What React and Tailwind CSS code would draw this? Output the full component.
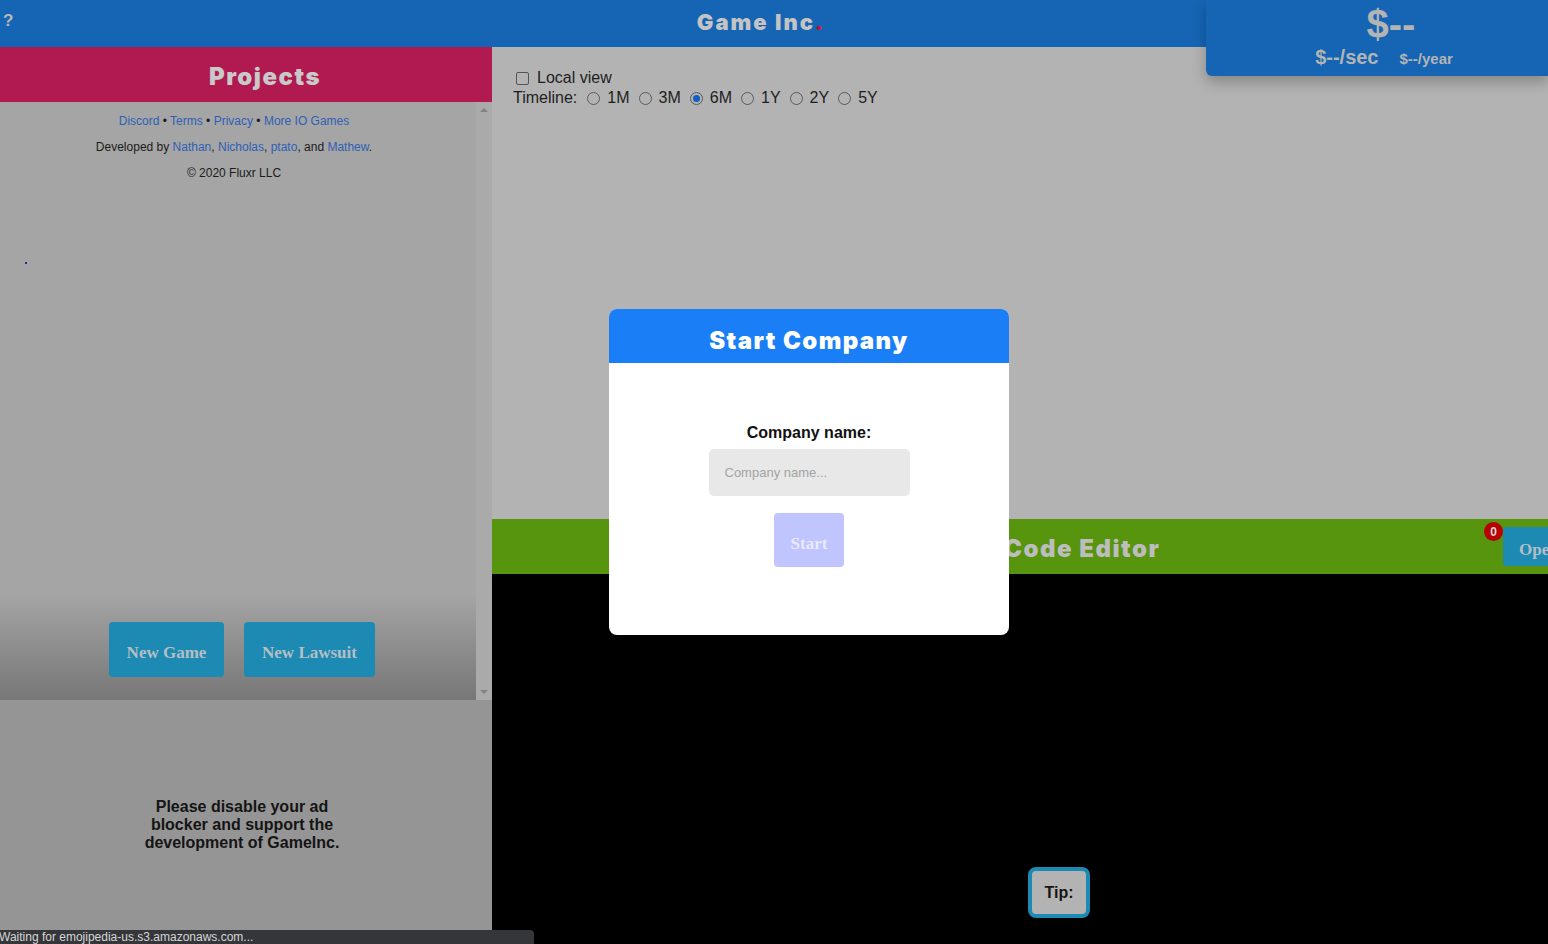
import { useState } from "react";

const heavy = { fontFamily: 'Inter, "DejaVu Sans", sans-serif' };

const RANGES = ["1M", "3M", "6M", "1Y", "2Y", "5Y"];

const Radio = ({ on }) => (
  <span className="inline-flex h-[13px] w-[13px] items-center justify-center rounded-full border border-[#5a5a5a] bg-[#b3b3b3]">
    {on && <span className="h-[7px] w-[7px] rounded-full bg-[#0f5fc4]" />}
  </span>
);

const App = () => {
  const [range] = useState("6M");

  return (
    <div className="relative flex h-[944px] w-[1548px] flex-col overflow-hidden font-['Liberation_Sans',Arial,sans-serif]">
      {/* top bar */}
      <div className="flex h-[47px] shrink-0 items-center bg-[#1565b4] px-[3px]">
        <span className="w-[20px] pb-[6px] text-[17px] font-bold text-[#b9b9b9]">?</span>
        <div className="flex flex-1 justify-center pb-[2px] pr-[26px]">
          <span style={heavy} className="text-[22px] font-black tracking-[2px] text-[#c4c4c4]">
            Game Inc<span className="text-[#d0102a]">.</span>
          </span>
        </div>
        <span className="w-[20px]" />
      </div>

      <div className="flex min-h-0 flex-1">
        {/* left column */}
        <div className="flex w-[492px] shrink-0 flex-col">
          <div className="flex h-[55px] items-center justify-center bg-[#b11a51] pl-[38px] pt-[5px]">
            <span style={heavy} className="text-[24px] font-black tracking-[1.5px] text-[#c9c9c9]">
              Projects
            </span>
          </div>

          <div className="flex h-[598px] bg-[#a5a5a5]">
            <div className="flex flex-1 flex-col">
              <div className="flex flex-col items-center pr-[8px] pt-[6px] text-[12px] leading-[26px] text-[#1b1b1b]">
                <p>
                  <span className="text-[#2f5fb6]">Discord</span> •{" "}
                  <span className="text-[#2f5fb6]">Terms</span> •{" "}
                  <span className="text-[#2f5fb6]">Privacy</span> •{" "}
                  <span className="text-[#2f5fb6]">More IO Games</span>
                </p>
                <p>
                  Developed by <span className="text-[#2f5fb6]">Nathan</span>,{" "}
                  <span className="text-[#2f5fb6]">Nicholas</span>,{" "}
                  <span className="text-[#2f5fb6]">ptato</span>, and{" "}
                  <span className="text-[#2f5fb6]">Mathew</span>.
                </p>
                <p>© 2020 Fluxr LLC</p>
              </div>
              <div className="ml-[25px] mt-[76px] h-[2px] w-[2px] bg-[#2a2a9a]" />
              <div className="flex-1" />
              <div className="flex h-[106px] items-center justify-center gap-[20px] bg-gradient-to-b from-[#a5a5a5] to-[#777777] pl-[8px] pt-[4px]">
                <button className="h-[55px] w-[115px] rounded-[4px] bg-[#1c8ab2] pt-[8px] font-['Liberation_Serif',serif] text-[17px] font-bold text-[#b5bec4]">
                  New Game
                </button>
                <button className="h-[55px] w-[131px] rounded-[4px] bg-[#1c8ab2] pt-[8px] font-['Liberation_Serif',serif] text-[17px] font-bold text-[#b5bec4]">
                  New Lawsuit
                </button>
              </div>
            </div>
            <div className="flex w-[16px] flex-col items-center justify-between bg-[#aaaaaa] py-[6px]">
              <span className="h-0 w-0 border-x-[4px] border-b-[4px] border-x-transparent border-b-[#838383]" />
              <span className="h-0 w-0 border-x-[4px] border-t-[4px] border-x-transparent border-t-[#838383]" />
            </div>
          </div>

          <div className="flex flex-1 justify-center bg-[#959595] pr-[8px] pt-[98px]">
            <p className="w-[210px] text-center text-[16px] font-bold leading-[18px] text-[#141414]">
              Please disable your ad blocker and support the development of GameInc.
            </p>
          </div>
        </div>

        {/* right column */}
        <div className="flex flex-1 flex-col">
          <div className="h-[472px] bg-[#b3b3b3] pl-[21px] pt-[21px] text-[16px] leading-[20px] text-[#1e1e1e]">
            <label className="flex items-center gap-[8px] pl-[3px]">
              <span className="h-[13px] w-[13px] rounded-[2px] border border-[#555] bg-[#b3b3b3]" />
              Local view
            </label>
            <div className="flex items-center">
              <span className="mr-[10px]">Timeline:</span>
              {RANGES.map((r) => (
                <span key={r} className="mr-[9px] flex items-center gap-[7px]">
                  <Radio on={r === range} />
                  {r}
                </span>
              ))}
            </div>
          </div>

          <div className="flex h-[55px] items-center bg-[#57950e]">
            <span style={heavy} className="ml-[512px] pt-[5px] text-[24px] font-black tracking-[1.5px] text-[#bdbdbd]">
              Code Editor
            </span>
            <div className="flex-1" />
            <div className="relative mr-[-30px] self-end mb-[8px]">
              <span className="absolute left-[-19px] top-[-5px] flex h-[19px] w-[19px] items-center justify-center rounded-full bg-[#b80000] text-[12px] font-bold text-[#d8d8d8]">
                0
              </span>
              <button className="h-[39px] w-[75px] rounded-l-[4px] bg-[#1c8ab2] pl-[16px] pt-[6px] text-left font-['Liberation_Serif',serif] text-[17px] font-bold text-[#b5bec4]">
                Open
              </button>
            </div>
          </div>

          <div className="flex flex-1 items-end justify-center bg-black pb-[26px] pl-[78px]">
            <div className="flex h-[51px] w-[62px] items-center justify-center rounded-[8px] border-[4px] border-[#1c8ab2] bg-[#b3b3b3] text-[16px] font-bold text-[#151515]">
              Tip:
            </div>
          </div>
        </div>
      </div>

      {/* money panel */}
      <div className="absolute right-0 top-0 flex h-[76px] w-[342px] flex-col items-center rounded-bl-[6px] bg-[#1565b4] pl-[28px] shadow-[0_6px_14px_rgba(0,0,0,0.25)]">
        <span className="mt-[3px] text-[40px] font-bold leading-[42px] text-[#b4b4b4]">$--</span>
        <div className="-mt-[3px] flex items-baseline gap-[21px] pr-[14px]">
          <span className="text-[20px] font-bold text-[#b4b4b4]">$--/sec</span>
          <span className="text-[15px] font-bold text-[#b4b4b4]">$--/year</span>
        </div>
      </div>

      {/* status bar */}
      <div className="absolute bottom-0 left-0 flex h-[14px] w-[534px] items-center overflow-hidden rounded-tr-[4px] bg-[#35363a]">
        <span className="-ml-[1px] text-[12px] leading-[14px] text-[#d6d6d6]">
          Waiting for emojipedia-us.s3.amazonaws.com...
        </span>
      </div>

      {/* modal */}
      <div className="absolute left-[609px] top-[309px] flex h-[326px] w-[400px] flex-col overflow-hidden rounded-[8px] bg-white">
        <div className="flex h-[54px] items-center justify-center bg-[#1a7ff6] pt-[9px]">
          <span style={heavy} className="text-[24px] font-black tracking-[1.4px] text-white">
            Start Company
          </span>
        </div>
        <div className="flex flex-col items-center pt-[58px]">
          <label className="text-[16px] font-bold text-[#111]">Company name:</label>
          <input
            placeholder="Company name..."
            className="mt-[4px] h-[47px] w-[201px] rounded-[5px] bg-[#e8e8e8] px-[16px] font-['Liberation_Sans',sans-serif] text-[13px] outline-none placeholder:text-[#a3a3a3]"
          />
          <button className="mt-[17px] h-[54px] w-[70px] rounded-[4px] bg-[#c0c4ff] pt-[8px] font-['Liberation_Serif',serif] text-[17px] font-bold text-[#e9ebff]">
            Start
          </button>
        </div>
      </div>
    </div>
  );
};

export default App;
